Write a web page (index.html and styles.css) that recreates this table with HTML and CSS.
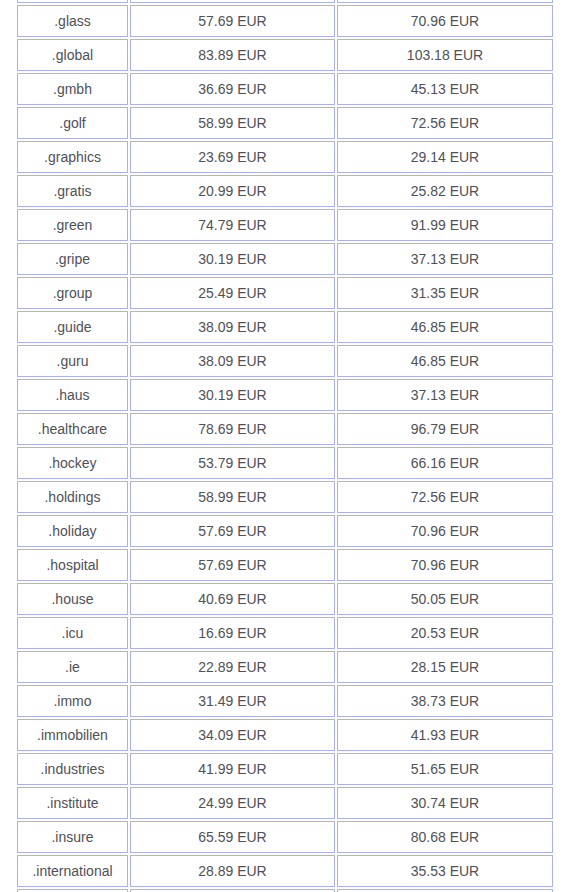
FILE: index.html
```html
<!DOCTYPE html>
<html>
<head>
<meta charset="utf-8">
<link rel="stylesheet" href="styles.css">
</head>
<body>
<div class="wrap">
<table class="prices">
<colgroup><col class="c1"><col class="c2"><col class="c3"></colgroup>
<tbody>
<tr class="offscreen"><td>.gifts</td><td>28.89 EUR</td><td>35.53 EUR</td></tr>
<tr><td>.glass</td><td>57.69 EUR</td><td>70.96 EUR</td></tr>
<tr><td>.global</td><td>83.89 EUR</td><td>103.18 EUR</td></tr>
<tr><td>.gmbh</td><td>36.69 EUR</td><td>45.13 EUR</td></tr>
<tr><td>.golf</td><td>58.99 EUR</td><td>72.56 EUR</td></tr>
<tr><td>.graphics</td><td>23.69 EUR</td><td>29.14 EUR</td></tr>
<tr><td>.gratis</td><td>20.99 EUR</td><td>25.82 EUR</td></tr>
<tr><td>.green</td><td>74.79 EUR</td><td>91.99 EUR</td></tr>
<tr><td>.gripe</td><td>30.19 EUR</td><td>37.13 EUR</td></tr>
<tr><td>.group</td><td>25.49 EUR</td><td>31.35 EUR</td></tr>
<tr><td>.guide</td><td>38.09 EUR</td><td>46.85 EUR</td></tr>
<tr><td>.guru</td><td>38.09 EUR</td><td>46.85 EUR</td></tr>
<tr><td>.haus</td><td>30.19 EUR</td><td>37.13 EUR</td></tr>
<tr><td>.healthcare</td><td>78.69 EUR</td><td>96.79 EUR</td></tr>
<tr><td>.hockey</td><td>53.79 EUR</td><td>66.16 EUR</td></tr>
<tr><td>.holdings</td><td>58.99 EUR</td><td>72.56 EUR</td></tr>
<tr><td>.holiday</td><td>57.69 EUR</td><td>70.96 EUR</td></tr>
<tr><td>.hospital</td><td>57.69 EUR</td><td>70.96 EUR</td></tr>
<tr><td>.house</td><td>40.69 EUR</td><td>50.05 EUR</td></tr>
<tr><td>.icu</td><td>16.69 EUR</td><td>20.53 EUR</td></tr>
<tr><td>.ie</td><td>22.89 EUR</td><td>28.15 EUR</td></tr>
<tr><td>.immo</td><td>31.49 EUR</td><td>38.73 EUR</td></tr>
<tr><td>.immobilien</td><td>34.09 EUR</td><td>41.93 EUR</td></tr>
<tr><td>.industries</td><td>41.99 EUR</td><td>51.65 EUR</td></tr>
<tr><td>.institute</td><td>24.99 EUR</td><td>30.74 EUR</td></tr>
<tr><td>.insure</td><td>65.59 EUR</td><td>80.68 EUR</td></tr>
<tr><td>.international</td><td>28.89 EUR</td><td>35.53 EUR</td></tr>
<tr class="offscreen"><td>.investments</td><td>65.59 EUR</td><td>80.68 EUR</td></tr>
</tbody>
</table>
</div>
</body>
</html>
```
FILE: styles.css
```css
html, body {
  margin: 0;
  padding: 0;
  background: #ffffff;
}
body {
  font-family: "Liberation Sans", Arial, sans-serif;
  font-size: 14px;
  color: #505058;
}
.wrap {
  padding: 0 0 0 15px;
  margin-top: -31px;
}
.prices {
  border-collapse: separate;
  border-spacing: 2px;
  table-layout: fixed;
  width: 540px;
}
.c1 { width: 111px; }
.c2 { width: 205px; }
.c3 { width: 216px; }
.prices td {
  box-sizing: border-box;
  border: 1px solid #aab0f0;
  padding: 7px 0;
  line-height: 16px;
  height: 32px;
  text-align: center;
  vertical-align: middle;
  white-space: nowrap;
}
.prices .offscreen td {
  color: transparent;
}
```
